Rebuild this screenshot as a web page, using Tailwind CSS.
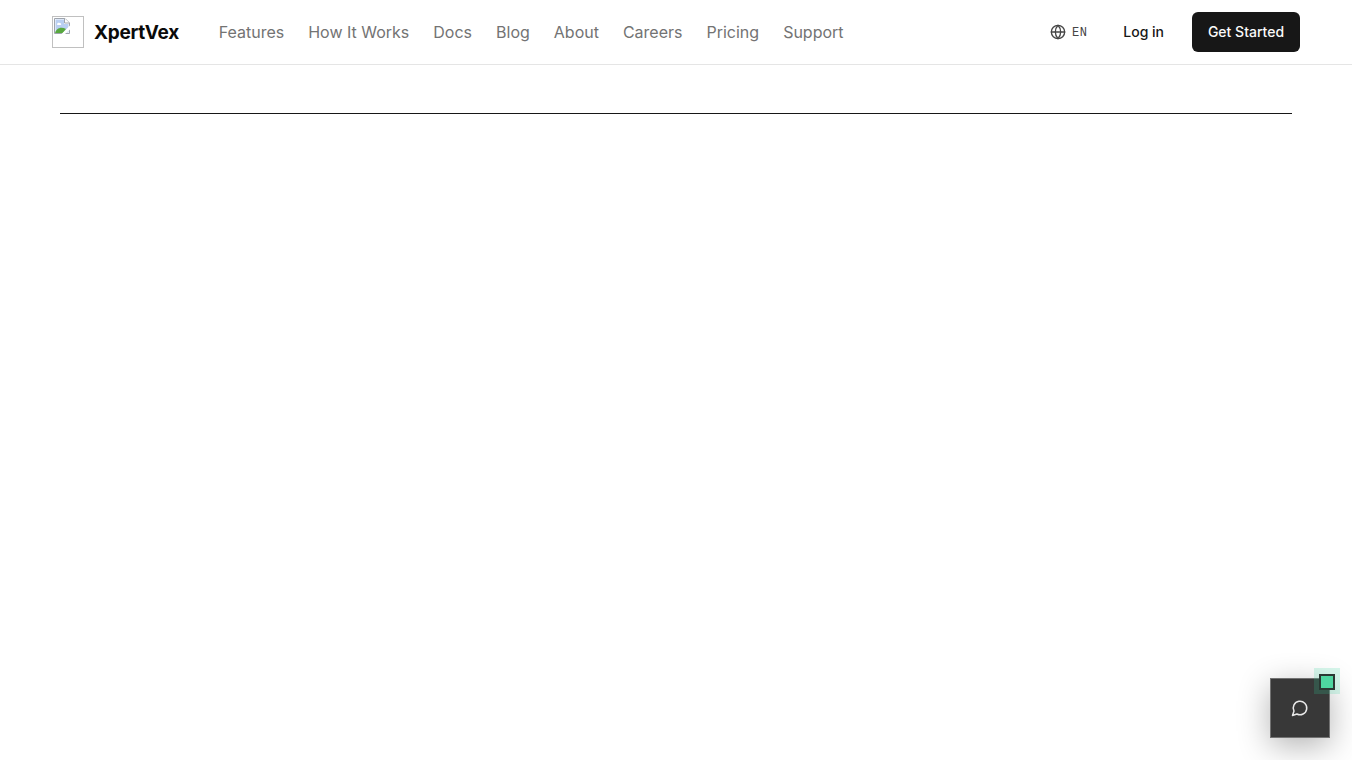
<!DOCTYPE html>
<html lang="en">
<head>
  <meta charset="UTF-8" />
  <meta name="viewport" content="width=device-width, initial-scale=1.0" />
  <title>XpertVex</title>
  <script src="https://cdn.jsdelivr.net/npm/@tailwindcss/browser@4"></script>
</head>
<body class="bg-white min-h-screen overflow-hidden font-['Inter',sans-serif] text-[#171717]">

  <!-- Header -->
  <header class="border-b border-[#e5e5e5] bg-white">
    <div class="max-w-7xl mx-auto px-4 h-16 flex items-center justify-between">
      <div class="flex items-center">
        <a href="#" class="flex items-center gap-2.5 w-[126.7px] mr-10">
          <span class="w-8 h-8 shrink-0 border border-[#c0c0c0] p-px">
            <svg class="w-4 h-4" viewBox="0 0 16 16" fill="none">
              <path d="M.5 .5H11L15.5 5V15.5H.5Z" fill="#fff" stroke="#9ea4ad" />
              <path d="M1.5 1.5H10V6H14.5V14.5H1.5Z" fill="#b9cff2" />
              <path d="M3 6.5C3 5 4.5 4.5 5.5 5C7 4.5 8 7 6.5 7H3.5Z" fill="#fff" />
              <path d="M1 15C2 10.5 7 8 12 11L9 15Z" fill="#58a83f" />
              <path d="M10.5 .5V5H15.5" fill="#fff" stroke="#9ea4ad" />
              <path d="M16 7.5L7.5 16H11L16 11.5Z" fill="#fff" />
            </svg>
          </span>
          <span class="pt-0.5 text-[19px] font-bold tracking-[-0.3px] text-[#0a0a0a] whitespace-nowrap">XpertVex</span>
        </a>
        <nav class="flex items-center gap-6 text-base text-[#737373]">
          <a href="#">Features</a>
          <a href="#">How It Works</a>
          <a href="#">Docs</a>
          <a href="#">Blog</a>
          <a href="#">About</a>
          <a href="#">Careers</a>
          <a href="#">Pricing</a>
          <a href="#">Support</a>
        </nav>
      </div>

      <div class="flex items-center text-sm font-medium">
        <button class="flex items-center gap-1.5 mr-9 text-[#454545]">
          <svg class="w-4 h-4" viewBox="0 0 24 24" fill="none" stroke="currentColor" stroke-width="2" stroke-linecap="round" stroke-linejoin="round">
            <circle cx="12" cy="12" r="10" />
            <path d="M12 2a14.5 14.5 0 0 0 0 20 14.5 14.5 0 0 0 0-20" />
            <path d="M2 12h20" />
          </svg>
          <span class="font-['Liberation_Mono',monospace] text-xs font-normal tracking-[0.4px] pt-0.5">EN</span>
        </button>
        <a href="#" class="mr-7">Log in</a>
        <a href="#" class="w-[108px] h-10 flex items-center justify-center rounded-md bg-[#171717] text-[#fafafa]">Get Started</a>
      </div>
    </div>
  </header>

  <main class="max-w-7xl mx-auto px-6 pt-12">
    <hr class="border-[#171717]" />
  </main>

  <!-- Chat launcher -->
  <button class="fixed right-[22px] bottom-[22px] w-[60px] h-[60px] flex items-center justify-center border border-[#727272] bg-[#383838] text-[#e8e8e8] shadow-[0_8px_32px_rgba(0,0,0,0.3)]">
    <svg class="w-[18px] h-[18px]" viewBox="0 0 24 24" fill="none" stroke="currentColor" stroke-width="2" stroke-linecap="round" stroke-linejoin="round">
      <path d="M7.9 20A9 9 0 1 0 4 16.1L2 22Z" />
    </svg>
    <span class="absolute -top-[11px] -right-[11px] w-[26px] h-[26px] bg-[#34d399]/20 flex items-center justify-center">
      <span class="w-4 h-4 mt-px border-2 border-[#2b3833] bg-[#4ed6a0]"></span>
    </span>
  </button>

</body>
</html>
